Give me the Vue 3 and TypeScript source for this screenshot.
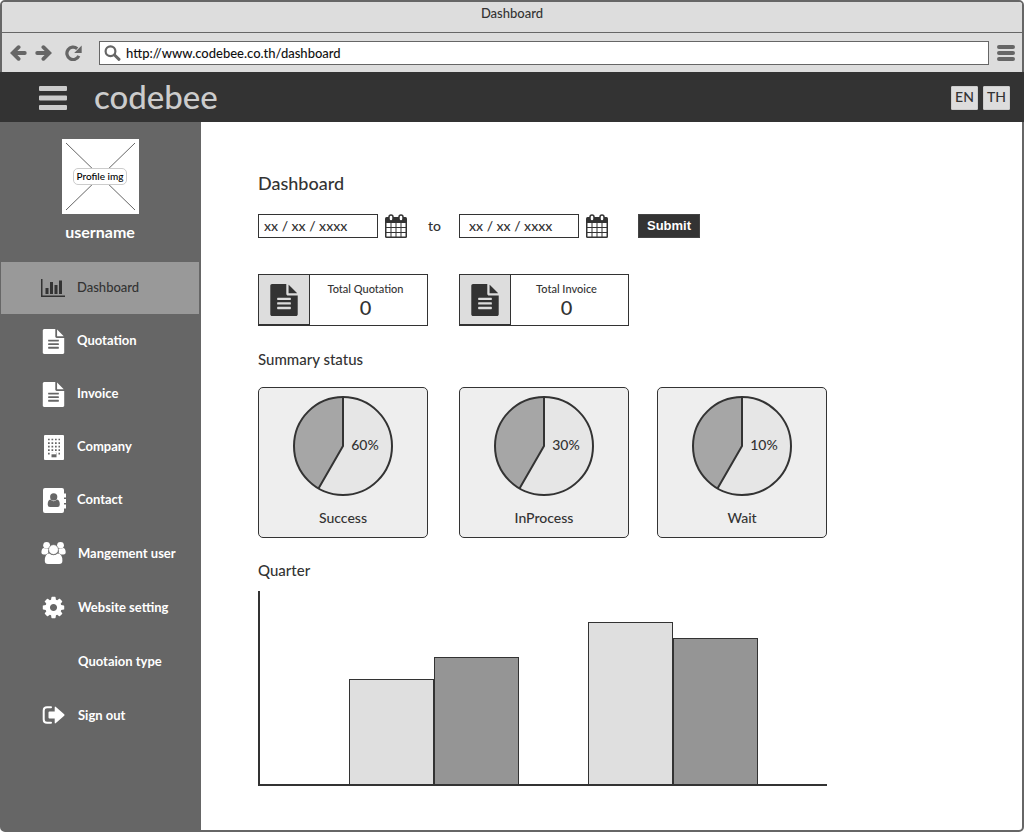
<script setup lang="ts">
import { ref } from 'vue'

interface NavItem {
  label: string
  icon: string
}

interface Stat {
  label: string
  value: number
}

interface Status {
  label: string
  percent: number
}

const primaryNav: NavItem[] = [
  { label: 'Dashboard', icon: 'chart' },
  { label: 'Quotation', icon: 'file' },
  { label: 'Invoice', icon: 'file' },
  { label: 'Company', icon: 'building' },
  { label: 'Contact', icon: 'contact' },
]

const secondaryNav: NavItem[] = [
  { label: 'Mangement user', icon: 'users' },
  { label: 'Website setting', icon: 'cog' },
  { label: 'Quotaion type', icon: '' },
  { label: 'Sign out', icon: 'signout' },
]

const stats: Stat[] = [
  { label: 'Total Quotation', value: 0 },
  { label: 'Total Invoice', value: 0 },
]

const statuses: Status[] = [
  { label: 'Success', percent: 60 },
  { label: 'InProcess', percent: 30 },
  { label: 'Wait', percent: 10 },
]

const quarters: number[][] = [
  [105, 127],
  [162, 146],
]

const address = ref('http://www.codebee.co.th/dashboard')
const dateFrom = ref('xx / xx / xxxx')
const dateTo = ref('xx / xx / xxxx')

const filePath =
  'M1596 476q14 14 28 36h-472v-472q22 14 36 28zm-476 164h544v1056q0 40-28 68t-68 28h-1344q-40 0-68-28t-28-68v-1600q0-40 28-68t68-28h800v544q0 40 28 68t68 28zm160 736v-64q0-14-9-23t-23-9h-704q-14 0-23 9t-9 23v64q0 14 9 23t23 9h704q14 0 23-9t9-23zm0-256v-64q0-14-9-23t-23-9h-704q-14 0-23 9t-9 23v64q0 14 9 23t23 9h704q14 0 23-9t9-23zm0-256v-64q0-14-9-23t-23-9h-704q-14 0-23 9t-9 23v64q0 14 9 23t23 9h704q14 0 23-9t9-23z'
const chartPath =
  'M640 896v512h-256v-512h256zm384-512v1024h-256v-1024h256zm1024 1152v128h-2048v-1536h128v1408h1920zm-640-896v768h-256v-768h256zm384-384v1152h-256v-1152h256z'
const cogPath =
  'M1152 896q0-106-75-181t-181-75-181 75-75 181 75 181 181 75 181-75 75-181zm512-109v222q0 12-8 23t-20 13l-185 28q-19 54-39 91 35 50 107 138 10 12 10 25t-9 23q-27 37-99 108t-94 71q-12 0-26-9l-138-108q-44 23-91 38-16 136-29 186-7 28-36 28h-222q-14 0-24.5-8.5t-11.5-21.5l-28-184q-49-16-90-37l-141 107q-10 9-25 9-14 0-25-11-126-114-165-168-7-10-7-23 0-12 8-23 15-21 51-66.5t54-70.5q-27-50-41-99l-183-27q-13-2-21-12.5t-8-23.5v-222q0-12 8-23t19-13l186-28q14-46 39-92-40-57-107-138-10-12-10-24 0-10 9-23 26-36 98.5-107.5t94.5-71.5q13 0 26 10l138 107q44-23 91-38 16-136 29-186 7-28 36-28h222q14 0 24.5 8.5t11.5 21.5l28 184q49 16 90 37l142-107q9-9 24-9 13 0 25 10 129 119 165 170 7 8 7 22 0 12-8 23-15 21-51 66.5t-54 70.5q26 50 41 98l183 28q13 2 21 12.5t8 23.5z'
const calendarCells =
  'M2.5 9h4v4h-4zM7.500 9h4v4h-4zM12.500 9h4v4h-4zM17.500 9h4v4h-4zM2.500 14h4v4h-4zM7.500 14h4v4h-4zM12.500 14h4v4h-4zM17.500 14h4v4h-4zM2.500 19h4v3.500h-4zM7.500 19h4v3.500h-4zM12.500 19h4v3.500h-4zM17.500 19h4v3.500h-4z'
</script>

<template>
  <div class="window">
    <div class="titlebar">Dashboard</div>

    <div class="toolbar">
      <div class="nav-buttons">
        <button type="button" class="icon-button" aria-label="Back">
          <svg width="17" height="16" viewBox="0 0 17 16">
            <path d="M8.6 2.2L2.7 8l5.9 5.800M3.500 8h11.300" fill="none" stroke="#666" stroke-width="3.8" stroke-linecap="round" />
          </svg>
        </button>
        <button type="button" class="icon-button" aria-label="Forward">
          <svg width="17" height="16" viewBox="0 0 17 16">
            <path d="M8.4 2.2L14.3 8l-5.900 5.800M13.500 8H2.200" fill="none" stroke="#666" stroke-width="3.8" stroke-linecap="round" />
          </svg>
        </button>
        <button type="button" class="icon-button reload" aria-label="Reload">
          <svg width="17" height="16" viewBox="0 0 17 16">
            <path d="M12.2 3.7A6.2 6.2 0 1 0 13.8 10.8" fill="none" stroke="#666" stroke-width="3.200" />
            <path d="M16.700.5v7.400H9.200z" fill="#666" />
          </svg>
        </button>
      </div>
      <label class="address">
        <svg width="17" height="16" viewBox="0 0 17 16" aria-hidden="true">
          <circle cx="6.5" cy="6.2" r="4.9" fill="none" stroke="#666" stroke-width="2.2" />
          <path d="M10.5 10L15 14.3" stroke="#666" stroke-width="3" stroke-linecap="round" />
        </svg>
        <input v-model="address" type="text" aria-label="Address" />
      </label>
      <button type="button" class="icon-button" aria-label="Browser menu">
        <svg width="18" height="16" viewBox="0 0 18 16">
          <path d="M2 2h14M2 8h14M2 14h14" stroke="#666" stroke-width="4" stroke-linecap="round" />
        </svg>
      </button>
    </div>

    <header class="header">
      <button type="button" class="icon-button" aria-label="Toggle menu">
        <svg width="28" height="24" viewBox="0 0 28 24">
          <path d="M1 0h26q1 0 1 1v3q0 1-1 1H1q-1 0-1-1V1q0-1 1-1zM1 9.500h26q1 0 1 1v3q0 1-1 1H1q-1 0-1-1v-3q0-1 1-1zM1 19h26q1 0 1 1v3q0 1-1 1H1q-1 0-1-1v-3q0-1 1-1z" fill="#ccc" />
        </svg>
      </button>
      <a href="#" class="brand">codebee</a>
      <div class="languages">
        <button type="button">EN</button>
        <button type="button">TH</button>
      </div>
    </header>

    <div class="body">
      <aside class="sidebar">
        <div class="profile">
          <div class="avatar">
            <svg class="cross" viewBox="0 0 77 75" aria-hidden="true">
              <path d="M4 4L73 71M73 4L4 71" stroke="#666" stroke-width="1" />
            </svg>
            <span class="avatar-label">Profile img</span>
          </div>
          <div class="username">username</div>
        </div>

        <nav>
          <ul v-for="(group, g) in [primaryNav, secondaryNav]" :key="g" :class="['menu', g ? 'secondary' : 'primary']">
            <li v-for="item in group" :key="item.label">
              <a href="#" :class="{ active: item.label === 'Dashboard' }">
                <span class="menu-icon">
                  <svg v-if="item.icon === 'chart'" width="24" height="24" viewBox="0 0 2048 1792">
                    <path :d="chartPath" fill="#333" />
                  </svg>
                  <svg v-else-if="item.icon === 'file'" width="25" height="25" viewBox="0 0 1792 1792">
                    <path :d="filePath" fill="#fff" />
                  </svg>
                  <svg v-else-if="item.icon === 'building'" width="25" height="25" viewBox="0 0 25 25">
                    <rect x="3" y="0" width="20" height="25" rx="1" fill="#fff" />
                    <path d="M7 4.5H19M7 8.1H19M7 11.6H19M7 15.2H19M7 18.7H19" stroke="#666" stroke-width="1.7" stroke-dasharray="1.7 1.8" />
                    <rect x="9.5" y="17.5" width="6" height="5" fill="#fff" />
                    <rect x="10.5" y="19.3" width="5" height="3" fill="#666" />
                  </svg>
                  <svg v-else-if="item.icon === 'contact'" width="25" height="25" viewBox="0 0 25 25">
                    <rect x="2" y="0" width="21" height="25" rx="2" fill="#fff" />
                    <path d="M22 5.500h3v4h-3zM22 11h3v4h-3zM22 16.500h3v4h-3z" fill="#fff" />
                    <circle cx="12.7" cy="8.9" r="3.6" fill="#666" />
                    <path d="M9.400 11.500q3.300 3.400 6.600 0q2.800.5 2.800 5q0 2.500-2.300 2.500H9q-2.300 0-2.300-2.500q0-4.500 2.700-5z" fill="#666" />
                  </svg>
                  <svg v-else-if="item.icon === 'users'" width="25" height="24" viewBox="0 0 25 24">
                    <g fill="#fff">
                      <circle cx="5.6" cy="4.3" r="3.4" />
                      <circle cx="19.5" cy="4.3" r="3.4" />
                      <path d="M3 7q2.600 1.800 5 .4q-1.200 2-.7 4.900q-1.400.2-2.300 1.300H2.600Q.4 13.600.4 11.600Q.4 7.200 3 7zM22 7q-2.600 1.800-5 .4q1.200 2 .7 4.900q1.400.2 2.300 1.300h2.500q2.200 0 2.200-2Q24.700 7.200 22 7z" />
                      <path d="M8.200 12.600q4.300 3.500 8.600 0q4.600.4 4.600 7.200q0 3.300-3.200 3.300H7q-3.200 0-3.200-3.300q0-6.800 4.400-7.200z" />
                    </g>
                    <circle cx="12.5" cy="8.6" r="4.9" fill="#fff" stroke="#666" stroke-width="0.6" />
                  </svg>
                  <svg v-else-if="item.icon === 'cog'" width="25" height="25" viewBox="0 0 1792 1792">
                    <path :d="cogPath" fill="#fff" />
                  </svg>
                  <svg v-else-if="item.icon === 'signout'" width="25" height="18" viewBox="0 0 25 18">
                    <path d="M10 1.200H6q-3.300 0-3.300 3.300v9q0 3.300 3.300 3.300h4" fill="none" stroke="#fff" stroke-width="2" stroke-linecap="round" />
                    <path d="M8.500 5.500h5.200V1.400q0-1.400 1.200-.5l8.300 7.300q.8.800 0 1.600l-8.300 7.300q-1.200.9-1.200-.5v-4.100H8.500q-1 0-1-1v-5q0-1 1-1z" fill="#fff" />
                  </svg>
                </span>
                <span class="menu-label">{{ item.label }}</span>
              </a>
            </li>
          </ul>
        </nav>
      </aside>

      <main class="content">
        <h1>Dashboard</h1>

        <form class="filters" @submit.prevent>
          <div class="date-field">
            <input v-model="dateFrom" type="text" aria-label="Start date" />
            <button type="button" class="icon-button" aria-label="Choose start date">
              <svg width="24" height="25" viewBox="0 0 24 25">
                <rect x="1" y="3" width="22" height="21" rx="1.5" fill="#333" />
                <path :d="calendarCells" fill="#fff" />
                <rect x="5" y="1" width="4" height="6" rx="2" fill="#fff" stroke="#333" stroke-width="1.5" />
                <rect x="15" y="1" width="4" height="6" rx="2" fill="#fff" stroke="#333" stroke-width="1.5" />
              </svg>
            </button>
          </div>
          <span class="to">to</span>
          <div class="date-field end">
            <input v-model="dateTo" type="text" aria-label="End date" />
            <button type="button" class="icon-button" aria-label="Choose end date">
              <svg width="24" height="25" viewBox="0 0 24 25">
                <rect x="1" y="3" width="22" height="21" rx="1.5" fill="#333" />
                <path :d="calendarCells" fill="#fff" />
                <rect x="5" y="1" width="4" height="6" rx="2" fill="#fff" stroke="#333" stroke-width="1.5" />
                <rect x="15" y="1" width="4" height="6" rx="2" fill="#fff" stroke="#333" stroke-width="1.5" />
              </svg>
            </button>
          </div>
          <button type="submit" class="submit">Submit</button>
        </form>

        <section class="columns stats">
          <article v-for="stat in stats" :key="stat.label" class="stat">
            <div class="stat-icon">
              <svg width="32" height="32" viewBox="0 0 1792 1792" aria-hidden="true">
                <path :d="filePath" fill="#333" />
              </svg>
            </div>
            <div class="stat-text">
              <span class="stat-label">{{ stat.label }}</span>
              <span class="stat-value">{{ stat.value }}</span>
            </div>
          </article>
        </section>

        <h2 class="summary-title">Summary status</h2>
        <section class="columns">
          <article v-for="status in statuses" :key="status.label" class="status">
            <svg width="102" height="102" viewBox="0 0 102 102">
              <circle cx="51" cy="51" r="49" fill="#e6e6e6" />
              <path d="M51 51L26.500 93.400A49 49 0 0 1 51 2z" fill="#a6a6a6" />
              <path d="M51 2V51L26.500 93.400" fill="none" stroke="#333" stroke-width="2" />
              <circle cx="51" cy="51" r="49" fill="none" stroke="#333" stroke-width="2" />
              <text x="73" y="55" text-anchor="middle">{{ status.percent }}%</text>
            </svg>
            <span class="status-label">{{ status.label }}</span>
          </article>
        </section>

        <h2 class="quarter-title">Quarter</h2>
        <section class="chart" aria-label="Quarter">
          <div v-for="(pair, i) in quarters" :key="i" class="pair">
            <div v-for="(value, j) in pair" :key="j" class="bar" :style="{ height: value + 'px' }"></div>
          </div>
        </section>
      </main>
    </div>
  </div>
</template>

<style>
body {
  background: #fff;
}
</style>

<style scoped>
* {
  box-sizing: border-box;
}

.window {
  display: flex;
  flex-direction: column;
  min-height: 100vh;
  border: 2px solid #666;
  border-radius: 5px;
  background: #fff;
  color: #333;
  font-family: Lato, 'Open Sans', sans-serif;
  font-size: 14px;
  font-weight: 500;
  line-height: 20px;
}

button,
input {
  font: inherit;
  color: inherit;
}

a {
  color: inherit;
  text-decoration: none;
}

h1,
h2 {
  margin: 0;
  font-weight: 500;
}

.icon-button {
  display: flex;
  padding: 0;
  border: 0;
  background: none;
}

.titlebar {
  height: 31px;
  padding-top: 1px;
  border-bottom: 1px solid #666;
  border-radius: 3px 3px 0 0;
  background: #ddd;
  font-size: 13px;
  text-align: center;
}

.toolbar {
  display: flex;
  align-items: center;
  gap: 8px;
  height: 39px;
  padding: 0 7px 0 8px;
  background: #ddd;
}

.nav-buttons {
  display: flex;
  gap: 8px;
  width: 81px;
}

.reload {
  margin-left: 5px;
}

.address {
  display: flex;
  flex: 1;
  align-items: center;
  height: 24px;
  padding-left: 4px;
  border: 1px solid #666;
  background: #fff;
}

.address input {
  flex: 1;
  min-width: 0;
  padding: 0 5px;
  border: 0;
  background: none;
  color: #111;
  font-size: 13px;
}

.header {
  display: flex;
  align-items: center;
  gap: 27px;
  height: 50px;
  margin: 0 -2px;
  padding: 2px 14px 0 39px;
  background: #333;
  color: #ccc;
}

.brand {
  padding-bottom: 4px;
  font-size: 33px;
  line-height: 44px;
}

.languages {
  display: flex;
  gap: 5px;
  margin-left: auto;
}

.languages button {
  width: 27px;
  height: 24px;
  padding: 0 0 2px;
  border: 1px solid #ccc;
  border-radius: 1px;
  background: #ddd;
  color: #333;
}

.body {
  display: flex;
  flex: 1;
}

.sidebar {
  width: 200px;
  margin-left: -1px;
  flex: none;
  padding-top: 17px;
  background: #666;
  color: #fff;
}

.profile {
  display: flex;
  flex-direction: column;
  align-items: center;
  gap: 8px;
  height: 123px;
  padding-right: 2px;
}

.avatar {
  display: grid;
  place-items: center;
  width: 77px;
  height: 75px;
  background: #fff;
}

.cross,
.avatar-label {
  grid-area: 1 / 1;
}

.avatar-label {
  z-index: 1;
  padding: 0 3px;
  border: 1px solid #ccc;
  border-radius: 5px;
  background: #fff;
  color: #000;
  font-size: 10px;
  line-height: 15px;
}

.username {
  font-size: 16px;
  font-weight: 700;
}

.menu {
  display: flex;
  flex-direction: column;
  margin: 0;
  padding: 0 2px 0 0;
  list-style: none;
}

.primary {
  gap: 1px;
}

.secondary {
  gap: 2px;
  padding-top: 1px;
}

.menu a {
  display: flex;
  align-items: center;
  height: 52px;
  padding-left: 40px;
  font-size: 13px;
  font-weight: 700;
}

.menu a.active {
  background: #999;
  color: #333;
  font-weight: 500;
}

.menu-icon {
  display: flex;
  width: 37px;
}

.primary .menu-icon {
  width: 36px;
}

.primary .menu-label {
  padding-bottom: 2px;
}

.content {
  flex: 1;
  padding: 49px 24px 43px 57px;
}

h1 {
  font-size: 18px;
  line-height: 24px;
}

.filters {
  display: flex;
  align-items: center;
  margin-top: 19px;
}

.date-field {
  display: flex;
  align-items: center;
  gap: 6px;
  height: 24px;
}

.date-field input {
  width: 120px;
  height: 24px;
  padding: 0 5px 2px;
  border: 1px solid #333;
  background: #fff;
}

.date-field.end input {
  padding: 0 9px 2px;
}

.to {
  width: 51px;
  padding-left: 2px;
  text-align: center;
}

.submit {
  width: 62px;
  height: 24px;
  margin-left: 29px;
  padding: 0 0 1px;
  border: 1px solid #444;
  background: #333;
  color: #fff;
  font-family: 'Liberation Sans', Arial, sans-serif;
  font-size: 13px;
  font-weight: 700;
}

.columns {
  display: grid;
  grid-template-columns: 201px 198px 170px;
}

.stats {
  margin-top: 36px;
}

.stat {
  display: flex;
  width: 170px;
  height: 52px;
  border: 1px solid #333;
}

.stat-icon {
  display: grid;
  place-items: center;
  width: 51px;
  border-right: 1px solid #333;
  border-bottom: 1px solid #333;
  background: #ddd;
}

.stat-text {
  display: flex;
  flex: 1;
  flex-direction: column;
  align-items: center;
  padding: 6px 6px 0 0;
}

.stat-label {
  font-size: 11px;
  line-height: 16px;
}

.stat-value {
  font-size: 20px;
  line-height: 20px;
}

h2 {
  font-size: 15px;
  line-height: 20px;
}

.summary-title {
  margin: 23px 0 18px;
}

.status {
  display: flex;
  flex-direction: column;
  align-items: center;
  gap: 11px;
  width: 170px;
  height: 151px;
  padding-top: 7px;
  border: 1px solid #333;
  border-radius: 5px;
  background: #eee;
}

.status text {
  fill: #333;
  font-size: 14px;
}

.quarter-title {
  margin: 22px 0 11px;
}

.chart {
  display: flex;
  align-items: flex-end;
  gap: 69px;
  max-width: 569px;
  height: 195px;
  padding-left: 89px;
  border-bottom: 2px solid #333;
  border-left: 2px solid #333;
}

.pair {
  display: flex;
  align-items: flex-end;
}

.bar {
  width: 85px;
  border: 1px solid #333;
  border-bottom: 0;
  background: #dfdfdf;
}

.bar + .bar {
  background: #959595;
}
</style>
